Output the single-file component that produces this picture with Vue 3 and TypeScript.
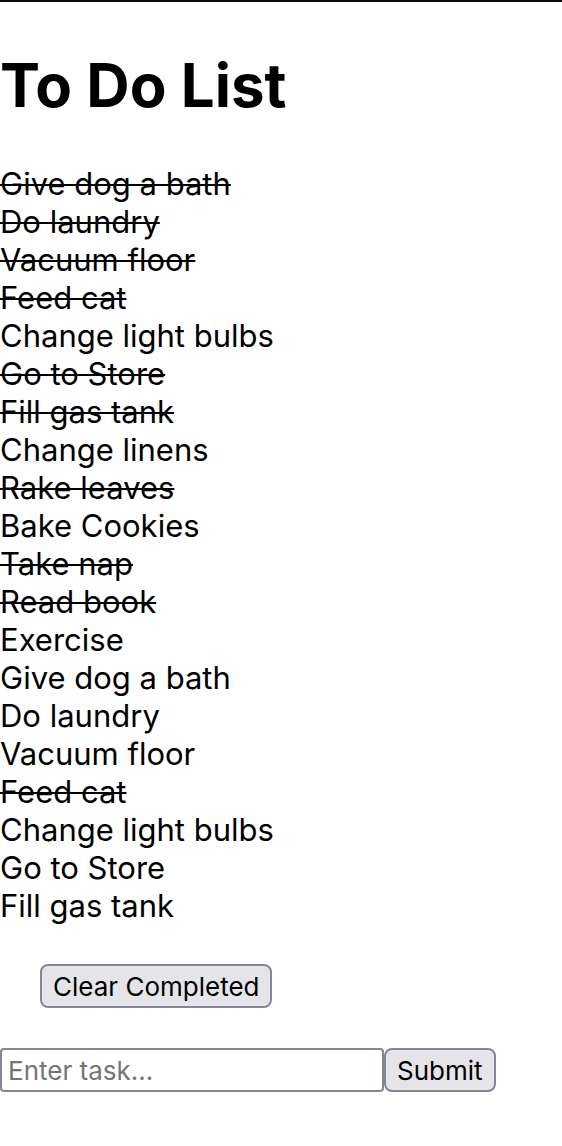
<script setup lang="ts">
import { ref } from 'vue'

interface Task {
  id: number
  name: string
  done: boolean
}

const tasks = ref<Task[]>([
  { id: 1, name: 'Give dog a bath', done: true },
  { id: 2, name: 'Do laundry', done: true },
  { id: 3, name: 'Vacuum floor', done: true },
  { id: 4, name: 'Feed cat', done: true },
  { id: 5, name: 'Change light bulbs', done: false },
  { id: 6, name: 'Go to Store', done: true },
  { id: 7, name: 'Fill gas tank', done: true },
  { id: 8, name: 'Change linens', done: false },
  { id: 9, name: 'Rake leaves', done: true },
  { id: 10, name: 'Bake Cookies', done: false },
  { id: 11, name: 'Take nap', done: true },
  { id: 12, name: 'Read book', done: true },
  { id: 13, name: 'Exercise', done: false },
  { id: 14, name: 'Give dog a bath', done: false },
  { id: 15, name: 'Do laundry', done: false },
  { id: 16, name: 'Vacuum floor', done: false },
  { id: 17, name: 'Feed cat', done: true },
  { id: 18, name: 'Change light bulbs', done: false },
  { id: 19, name: 'Go to Store', done: false },
  { id: 20, name: 'Fill gas tank', done: false },
])
const draft = ref('')

function toggle(task: Task) {
  task.done = !task.done
}

function clearCompleted() {
  tasks.value = tasks.value.filter((task) => !task.done)
}

function addTask() {
  const name = draft.value.trim()
  if (!name) return
  tasks.value.push({ id: Date.now(), name, done: false })
  draft.value = ''
}
</script>

<template>
  <main class="app">
    <h1 class="title">To Do List</h1>
    <ul class="list">
      <li
        v-for="task in tasks"
        :key="task.id"
        class="task"
        :class="{ done: task.done }"
        @click="toggle(task)"
      >
        {{ task.name }}
      </li>
    </ul>
    <button class="button clear" type="button" @click="clearCompleted">Clear Completed</button>
    <form class="entry" @submit.prevent="addTask">
      <input v-model="draft" class="field" type="text" aria-label="Task" placeholder="Enter task..." />
      <button class="button" type="submit">Submit</button>
    </form>
  </main>
</template>

<style>
body {
  margin: 0;
  background: #fff;
}
</style>

<style scoped>
.app {
  border-top: 2px solid #0c0c0d;
  color: #000;
  font-family: Inter, "Liberation Sans", sans-serif;
  font-size: 31px;
  line-height: 38px;
}

.title {
  margin: 45px 0 42px;
  font-size: 60px;
  font-weight: 700;
  line-height: 76px;
}

.list {
  margin: 0;
  padding: 0;
  list-style: none;
}

.task {
  cursor: pointer;
}

.done {
  text-decoration: line-through;
  text-decoration-thickness: 2px;
}

.button,
.field {
  box-sizing: border-box;
  height: 44px;
  margin: 0;
  border: 2px solid #858595;
  color: #000;
  font-family: inherit;
  font-size: 26px;
  line-height: 30px;
}

.button {
  padding: 6px 11px 4px;
  border-radius: 8px;
  background: #e5e5e9;
}

.clear {
  display: block;
  margin: 39px 40px 40px;
}

.entry {
  display: flex;
}

.field {
  width: 384px;
  min-width: 0;
  padding: 4px 6px;
  border-radius: 4px;
  background: #fff;
}

.field::placeholder {
  color: #757575;
  opacity: 1;
}
</style>
